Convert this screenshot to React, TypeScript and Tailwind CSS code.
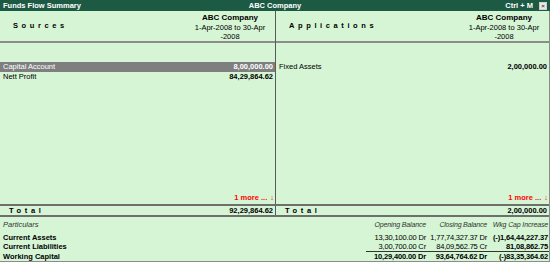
const font = { fontFamily: '"Liberation Sans", Arial, sans-serif' };

function Heading({ label }: { label: string }) {
  return (
    <div className="flex h-[30px]">
      <div className="flex flex-1 items-center pl-[13px] text-[7.5px] font-bold tracking-[3.6px] text-black">
        {label}
      </div>
      <div className="mr-[5px] flex w-[80px] flex-col items-center pt-[2px] leading-[9.5px] whitespace-nowrap text-black">
        <div className="text-[8px] font-bold">ABC Company</div>
        <div className="text-[7.5px]">1-Apr-2008 to 30-Apr</div>
        <div className="text-[7.5px]">-2008</div>
      </div>
    </div>
  );
}

function Row({
  name,
  amount,
  active,
}: {
  name: string;
  amount: string;
  active?: boolean;
}) {
  return (
    <div
      className={
        'flex h-[10px] items-center justify-between pl-[3px] pr-[2px] text-[7.5px] leading-[10px] ' +
        (active ? 'bg-[#7f7f7f] text-white' : 'text-black')
      }
    >
      <span>{name}</span>
      <span className="font-bold">{amount}</span>
    </div>
  );
}

function Side({
  label,
  rows,
  border,
}: {
  label: string;
  rows: { name: string; amount: string; active?: boolean }[];
  border?: boolean;
}) {
  return (
    <div className={'flex flex-1 flex-col ' + (border ? 'border-r border-[#5a5a5a]' : '')}>
      <Heading label={label} />
      <div className="h-[2px] bg-[#8c8c8c]" />
      <div className="flex flex-1 flex-col pt-[19px]">
        {rows.map((r) => (
          <Row key={r.name} {...r} />
        ))}
        <div className="mt-auto mb-[1px] flex h-[10px] items-center justify-end pr-[1px] text-[7.5px] font-bold text-[#ff0000]">
          1 more ...
          <span className="ml-[3px] font-normal">↓</span>
        </div>
      </div>
    </div>
  );
}

function Totals({ total, border }: { total: string; border?: boolean }) {
  return (
    <div
      className={
        'flex h-[9px] flex-1 items-center justify-between pl-[9px] pr-[2px] text-[7.5px] font-bold text-black ' +
        (border ? 'border-r border-[#5a5a5a]' : '')
      }
    >
      <span className="tracking-[3.6px]">Total</span>
      <span>{total}</span>
    </div>
  );
}

function Figures({
  a,
  b,
  c,
  cBold,
}: {
  a: string;
  b: string;
  c: string;
  cBold?: boolean;
}) {
  return (
    <>
      <span className="w-[60px] text-right tracking-[-0.15px] whitespace-nowrap">{a}</span>
      <span className="w-[61px] text-right tracking-[-0.2px] whitespace-nowrap">{b}</span>
      <span
        className={
          'w-[62px] pr-[1px] text-right tracking-[-0.15px] whitespace-nowrap ' + (cBold ? 'font-bold' : '')
        }
      >
        {c}
      </span>
    </>
  );
}

export default function App() {
  return (
    <div className="flex h-[262px] w-[550px] flex-col overflow-hidden bg-[#d5f5d5]" style={font}>
      <div className="flex h-[11px] items-center bg-[#1d5a44] px-[3px] text-[7.5px] font-bold text-white">
        <div className="flex-1">Funds Flow Summary</div>
        <div className="flex-1 text-center">ABC Company</div>
        <div className="flex flex-1 items-center justify-end gap-[6px]">
          <span>Ctrl + M</span>
          <span className="flex h-[8px] w-[8px] items-center justify-center border border-[#cfcfcf] bg-[#e8e8e8] text-[6px] leading-none text-[#444]">
            ×
          </span>
        </div>
      </div>
      <div className="h-[1px] bg-[#2d2d2d]" />
      <div className="flex flex-1 flex-col border-r border-[#8c8c8c]">
        <div className="flex h-[193px]">
          <div className="flex w-[276px]">
            <Side
              label="Sources"
              border
              rows={[
                { name: 'Capital Account', amount: '8,00,000.00', active: true },
                { name: 'Nett Profit', amount: '84,29,864.62' },
              ]}
            />
          </div>
          <Side label="Applications" rows={[{ name: 'Fixed Assets', amount: '2,00,000.00' }]} />
        </div>
        <div className="flex border-y-2 border-[#6e6e6e]">
          <div className="flex w-[276px]">
            <Totals total="92,29,864.62" border />
          </div>
          <Totals total="2,00,000.00" />
        </div>
        <div className="flex flex-1 flex-col border-b border-[#8c8c8c] pl-[3px] pt-[2px] text-[7.5px] leading-[9px] text-black">
          <div className="flex h-[10px] items-center text-[7px] italic text-[#333]">
            <span className="flex-1 text-[7.5px]">Particulars</span>
            <Figures a="Opening Balance" b="Closing Balance" c="Wkg Cap Increase" />
          </div>
          <div className="mt-[3px] flex h-[10px] items-center">
            <span className="flex-1 font-bold">Current Assets</span>
            <Figures a="13,30,100.00 Dr" b="1,77,74,327.37 Dr" c="(-)1,64,44,227.37" cBold />
          </div>
          <div className="flex h-[9px] items-center">
            <span className="flex-1 font-bold">Current Liabilities</span>
            <Figures a="3,00,700.00 Cr" b="84,09,562.75 Cr" c="81,08,862.75" cBold />
          </div>
          <div className="flex h-[10px] items-center font-bold">
            <span className="flex-1">Working Capital</span>
            <div className="flex h-full items-center border-t border-[#333]">
              <Figures a="10,29,400.00 Dr" b="93,64,764.62 Dr" c="(-)83,35,364.62" />
            </div>
          </div>
        </div>
      </div>
    </div>
  );
}
